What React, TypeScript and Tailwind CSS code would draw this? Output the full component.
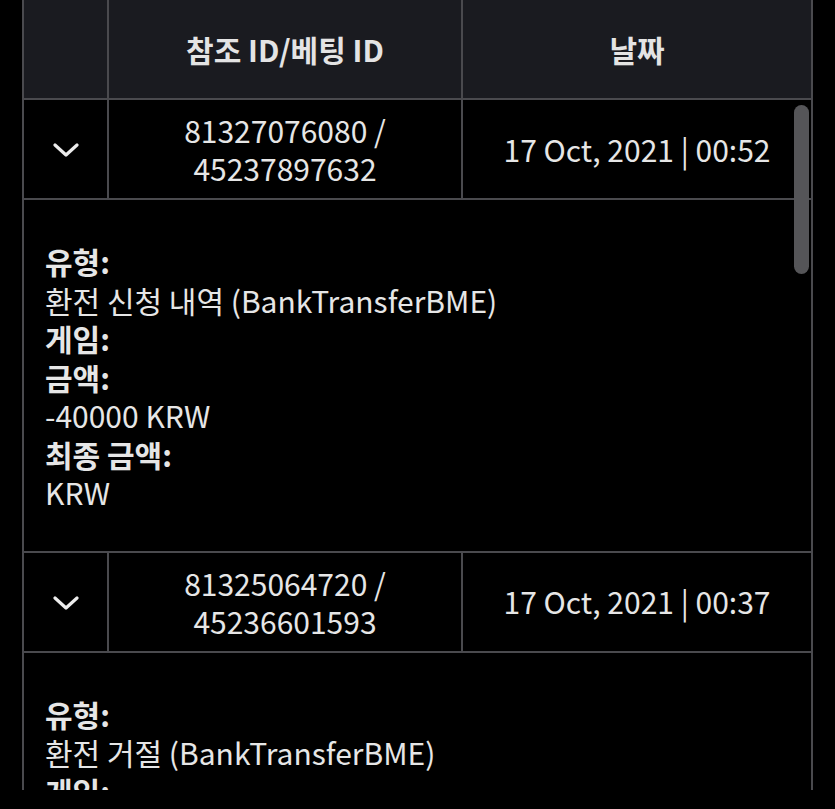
import React from "react";

const B = "border-[#4a4a4e]";

function Chevron() {
  return (
    <svg width="26" height="16" viewBox="0 0 26 16" fill="none">
      <path d="M2 3 L13 13 L24 3" stroke="#ececec" strokeWidth="3.2" strokeLinecap="round" strokeLinejoin="round" />
    </svg>
  );
}

type Item = { ref: string; bet: string; date: string; type: string; amount: string; final: string };

const items: Item[] = [
  { ref: "81327076080", bet: "45237897632", date: "17 Oct, 2021 | 00:52", type: "환전 신청 내역 (BankTransferBME)", amount: "-40000 KRW", final: "KRW" },
  { ref: "81325064720", bet: "45236601593", date: "17 Oct, 2021 | 00:37", type: "환전 거절 (BankTransferBME)", amount: "-40000 KRW", final: "KRW" },
];

function Row({ it }: { it: Item }) {
  return (
    <>
      <div className={`flex h-[100px] border-b-2 ${B}`}>
        <div className={`w-[85px] shrink-0 border-r-2 ${B} flex items-center justify-center pt-[2px]`}>
          <Chevron />
        </div>
        <div className={`w-[354px] shrink-0 border-r-2 ${B} flex flex-col items-center justify-center text-[30px] leading-[38px]`}>
          <div>{it.ref} /</div>
          <div>{it.bet}</div>
        </div>
        <div className="flex-1 flex items-center justify-center text-[30px]">{it.date}</div>
      </div>
      <div className={`border-b-2 ${B} pl-[21px] pt-[42px] pb-[39px] text-[30px] leading-[38.5px]`}>
        <div className="font-bold">유형:</div>
        <div>{it.type}</div>
        <div className="font-bold">게임:</div>
        <div className="font-bold">금액:</div>
        <div>{it.amount}</div>
        <div className="font-bold">최종 금액:</div>
        <div>{it.final}</div>
      </div>
    </>
  );
}

export default function App() {
  return (
    <div
      className="w-[835px] h-[809px] bg-black text-[#e6e6e6] overflow-hidden relative"
      style={{ fontFamily: '"Noto Sans CJK KR", "Noto Sans", sans-serif' }}
    >
      <div className={`ml-[22px] w-[791px] h-[790px] overflow-hidden border-l-2 border-r-2 ${B}`}>
        <div className={`flex h-[100px] bg-[#1a1b20] border-b-2 ${B} text-[30px] font-bold text-[#e4e4e4]`}>
          <div className={`w-[85px] shrink-0 border-r-2 ${B}`} />
          <div className={`w-[354px] shrink-0 border-r-2 ${B} flex items-center justify-center`}>참조 ID/베팅 ID</div>
          <div className="flex-1 flex items-center justify-center">날짜</div>
        </div>
        {items.map((it) => (
          <Row key={it.ref} it={it} />
        ))}
      </div>
      <div className="absolute left-[794px] top-[105px] w-[15px] h-[169px] rounded-full bg-[#555558]" />
    </div>
  );
}
